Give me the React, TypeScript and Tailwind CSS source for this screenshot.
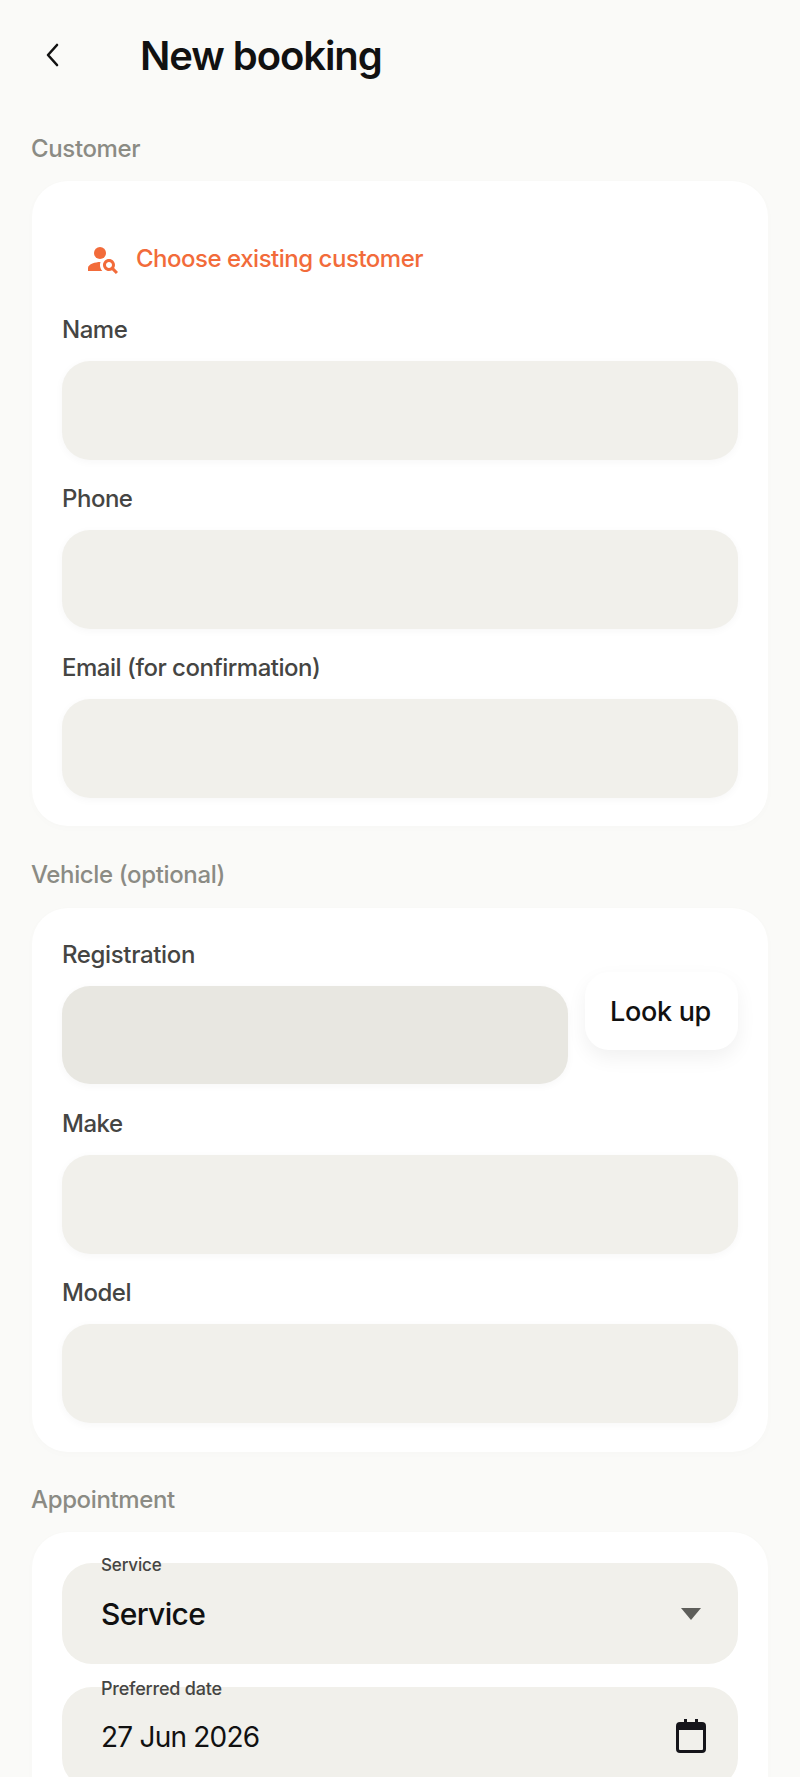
const font = { fontFamily: '"Inter", "Noto Sans", sans-serif' };

function Field({ label, tone = "bg-[#f1f0eb]" }: { label: string; tone?: string }) {
  return (
    <div className="flex flex-col">
      <div className="h-[32px] pt-[2px] flex items-center text-[24px] font-medium tracking-[-0.02em] text-[#454543]">{label}</div>
      <div className={`mt-[16px] h-[99px] rounded-[28px] ${tone} shadow-[0_2px_9px_rgba(0,0,0,0.035)]`} />
    </div>
  );
}

function SectionLabel({ children, className }: { children: string; className: string }) {
  return <div className={`h-[32px] flex items-center pl-[31px] text-[24px] font-medium tracking-[-0.015em] text-[#8b8b84] ${className}`}>{children}</div>;
}

export default function App() {
  return (
    <div style={font} className="relative w-[800px] h-[1777px] overflow-hidden bg-[#fafaf8]">
      <header className="h-[110px] flex items-center">
        <svg className="ml-[44px] w-[18px] h-[28px]" viewBox="0 0 18 28" fill="none" stroke="#111" strokeWidth="2.6" strokeLinecap="round" strokeLinejoin="round">
          <path d="M13 4 L4 14 L13 24" />
        </svg>
        <h1 className="ml-[78px] pt-[2px] text-[40px] font-semibold tracking-[-0.027em] text-[#111111]">New booking</h1>
      </header>

      <SectionLabel className="mt-[23px]">Customer</SectionLabel>
      <section className="mx-[32px] mt-[16px] h-[645px] rounded-[36px] bg-white px-[30px] shadow-[0_2px_10px_rgba(0,0,0,0.015)]">
        <div className="h-[132px] pt-[60px] flex items-start pl-[23px]">
          <svg className="w-[36px] h-[36px]" viewBox="0 0 24 24" fill="#f26b3a">
            <circle cx="10" cy="8" r="4" />
            <path d="M10.35 14.01C7.62 13.91 2 15.27 2 18v2h9.54c-2.47-2.76-1.23-5.89-1.19-5.99zM19.43 18.02c.36-.59.57-1.28.57-2.02 0-2.21-1.79-4-4-4s-4 1.79-4 4 1.79 4 4 4c.74 0 1.43-.22 2.02-.57L20.59 22 22 20.59l-2.57-2.57zM16 18c-1.1 0-2-.9-2-2s.9-2 2-2 2 .9 2 2-.9 2-2 2z" />
          </svg>
          <span className="ml-[15px] h-[36px] flex items-center text-[24px] font-medium tracking-[-0.02em] text-[#f26b3a]">Choose existing customer</span>
        </div>
        <div className="flex flex-col gap-[22px]">
          <Field label="Name" />
          <Field label="Phone" />
          <Field label="Email (for confirmation)" />
        </div>
      </section>

      <SectionLabel className="mt-[33px]">Vehicle (optional)</SectionLabel>
      <section className="mx-[32px] mt-[17px] h-[544px] rounded-[36px] bg-white px-[30px] pt-[31px] shadow-[0_2px_10px_rgba(0,0,0,0.015)]">
        <div className="h-[32px] flex items-center text-[24px] font-medium tracking-[-0.015em] text-[#454543]">Registration</div>
        <div className="mt-[15px] flex items-start gap-[17px]">
          <div className="w-[506px] h-[98px] rounded-[28px] bg-[#e8e7e1] shadow-[0_2px_9px_rgba(0,0,0,0.035)]" />
          <button className="mt-[-14px] w-[153px] h-[78px] pt-[3px] pr-[2px] rounded-[24px] bg-white text-[27px] font-medium tracking-[-0.012em] text-[#111111] shadow-[0_8px_20px_rgba(0,0,0,0.06)]">Look up</button>
        </div>
        <div className="mt-[23px] flex flex-col gap-[22px]">
          <Field label="Make" />
          <Field label="Model" />
        </div>
      </section>

      <SectionLabel className="mt-[32px]">Appointment</SectionLabel>
      <section className="mx-[32px] mt-[16px] h-[400px] rounded-[36px] bg-white px-[30px] pt-[31px] shadow-[0_2px_10px_rgba(0,0,0,0.015)]">
        <div className="relative h-[101px] rounded-[30px] bg-[#f1f0eb] flex items-center justify-between pl-[39px] pr-[37px]">
          <span className="absolute left-[39px] top-[-9px] text-[17px] font-medium tracking-[-0.01em] leading-[22px] text-[#454543]">Service</span>
          <span className="mt-[2px] text-[30px] font-medium tracking-[-0.022em] text-[#111111]">Service</span>
          <svg className="w-[20px] h-[12px]" viewBox="0 0 20 12" fill="#5e5e5a"><path d="M0 0h20L10 12z" /></svg>
        </div>
        <div className="relative mt-[23px] h-[101px] rounded-[30px] bg-[#f1f0eb] flex items-start justify-between pl-[39px] pr-[32px]">
          <span className="absolute left-[39px] top-[-9px] text-[18px] font-medium tracking-[-0.012em] leading-[22px] text-[#454543]">Preferred date</span>
          <span className="mt-[30px] text-[28px] tracking-[-0.028em] leading-[40px] text-[#111111]">27 Jun 2026</span>
          <svg className="mt-[32px] w-[30px] h-[34px]" viewBox="0 0 30 34">
            <path d="M8 0h3v3h8V0h3v3h4a4 4 0 0 1 4 4v23a4 4 0 0 1-4 4H4a4 4 0 0 1-4-4V7a4 4 0 0 1 4-4h4zM3 11v19a1 1 0 0 0 1 1h22a1 1 0 0 0 1-1V11z" fill="#15151a" fillRule="evenodd" />
          </svg>
        </div>
      </section>
    </div>
  );
}
